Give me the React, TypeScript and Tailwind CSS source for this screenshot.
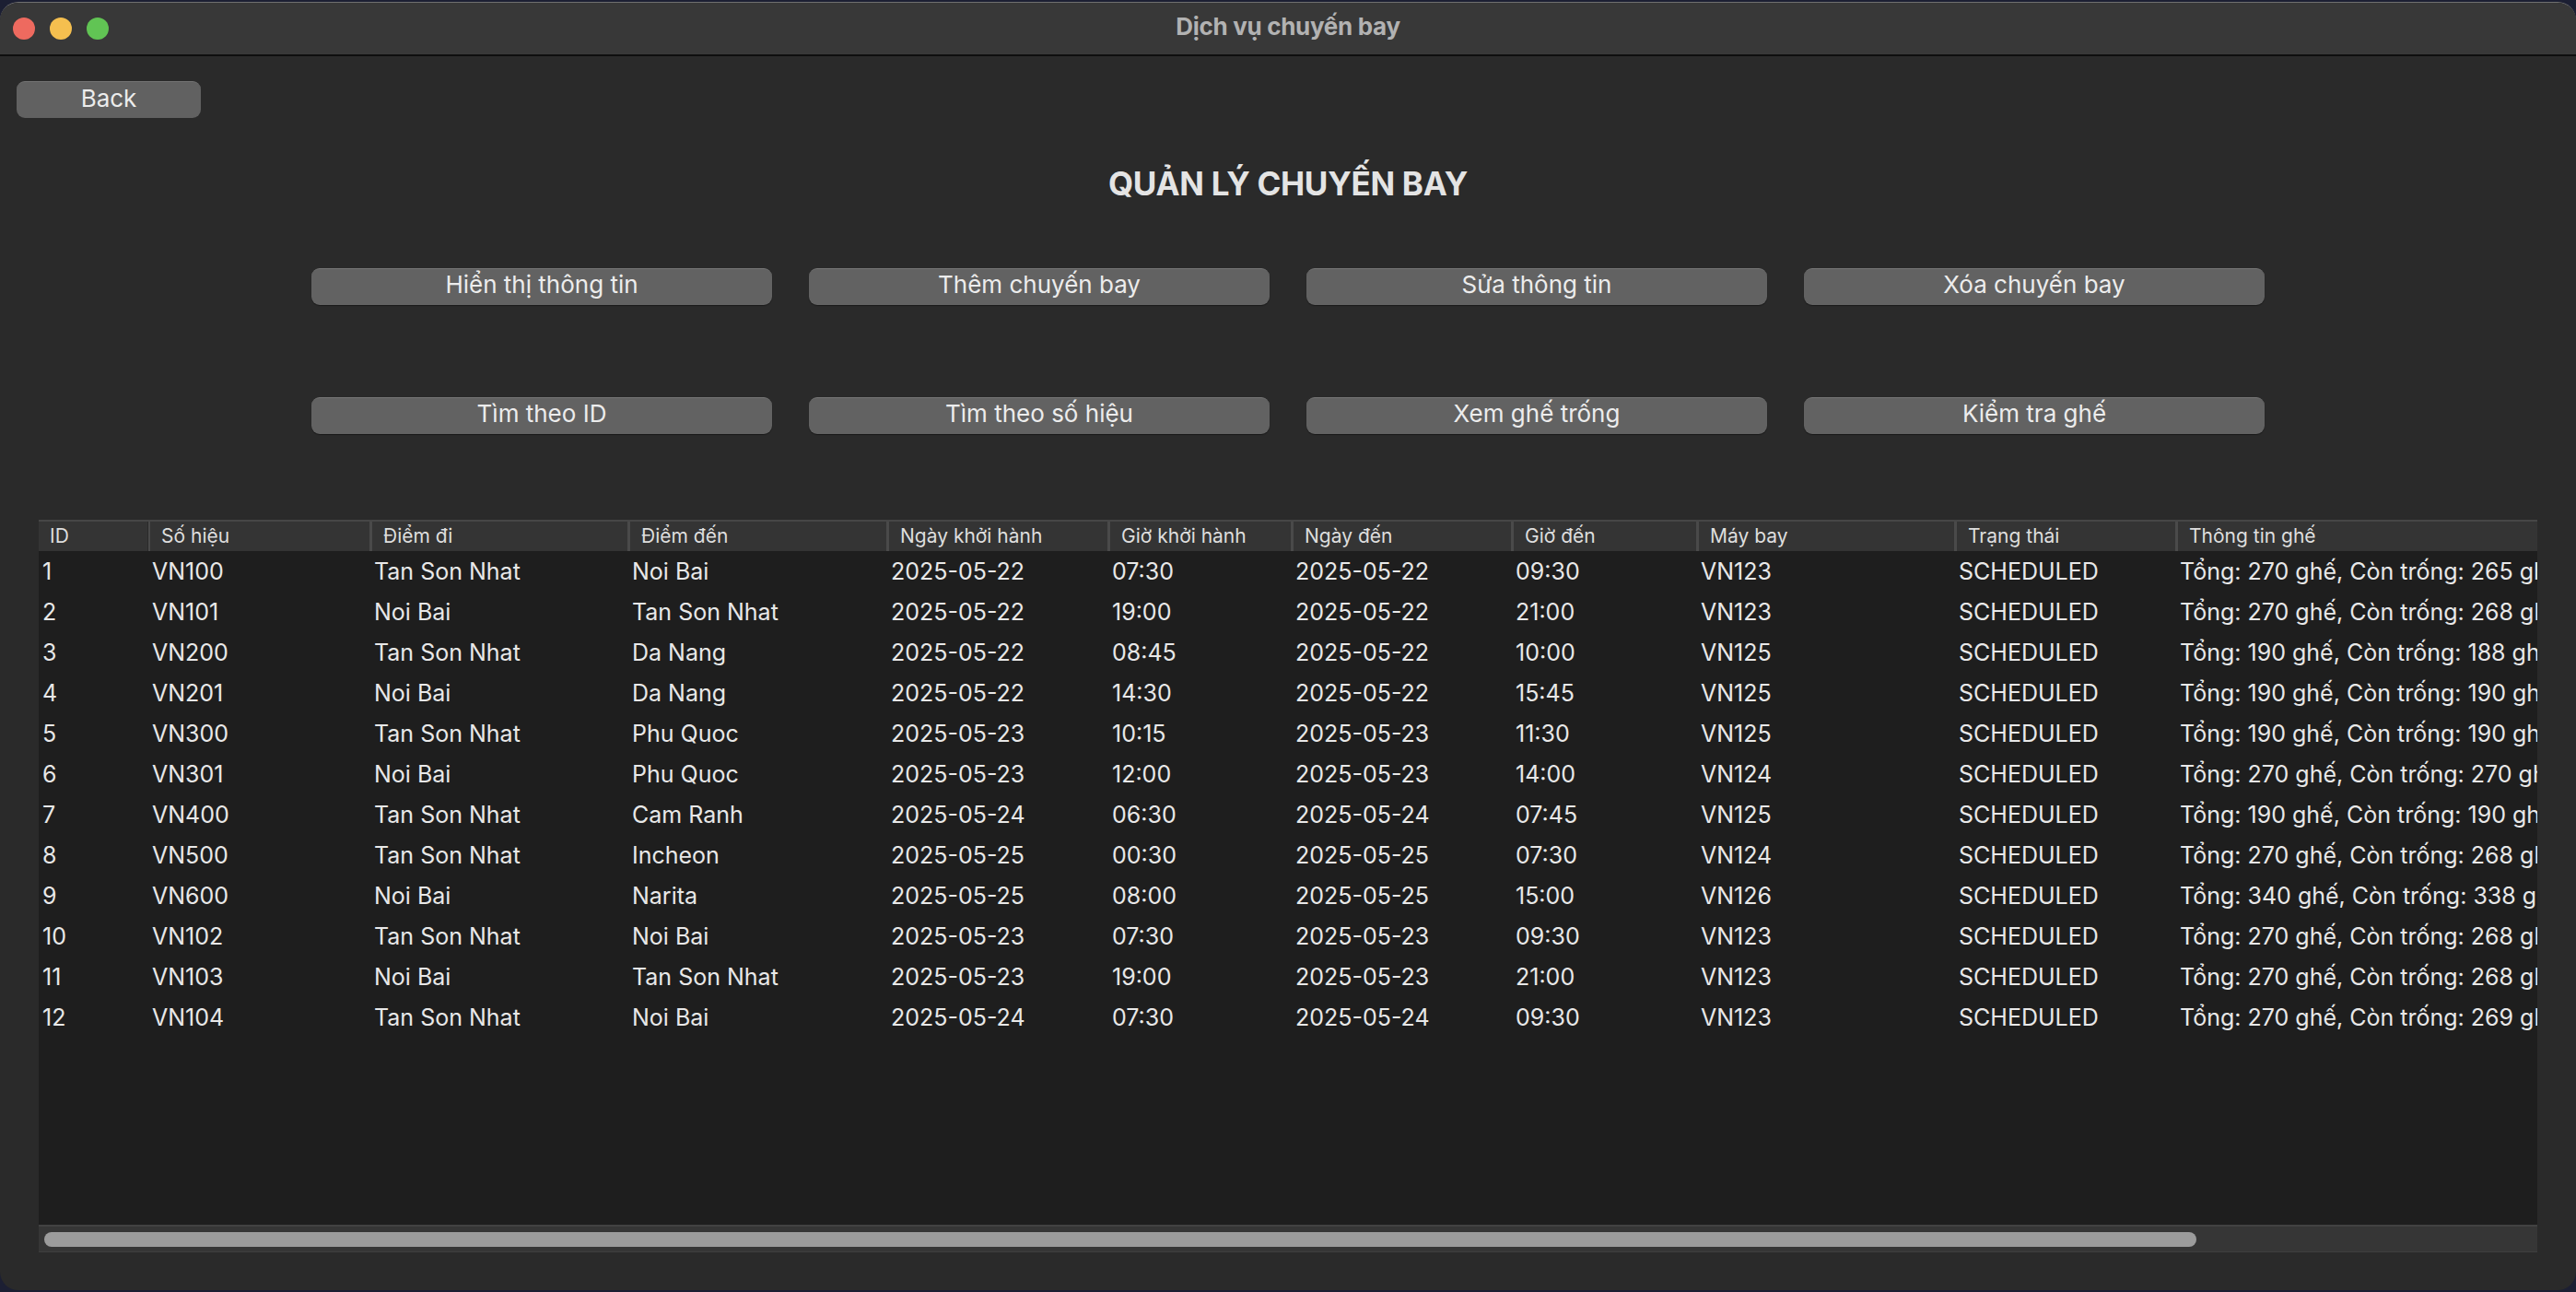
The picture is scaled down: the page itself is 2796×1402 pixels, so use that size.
import React from 'react';

const columns = [
  { title: 'ID', width: 'w-[119px]' },
  { title: 'Số hiệu', width: 'w-[241px]' },
  { title: 'Điểm đi', width: 'w-[280px]' },
  { title: 'Điểm đến', width: 'w-[281px]' },
  { title: 'Ngày khởi hành', width: 'w-[240px]' },
  { title: 'Giờ khởi hành', width: 'w-[199px]' },
  { title: 'Ngày đến', width: 'w-[239px]' },
  { title: 'Giờ đến', width: 'w-[201px]' },
  { title: 'Máy bay', width: 'w-[280px]' },
  { title: 'Trạng thái', width: 'w-[240px]' },
  { title: 'Thông tin ghế', width: 'w-[560px]' },
];

const flights = [
  ['1', 'VN100', 'Tan Son Nhat', 'Noi Bai', '2025-05-22', '07:30', '2025-05-22', '09:30', 'VN123', 'SCHEDULED', 270, 265],
  ['2', 'VN101', 'Noi Bai', 'Tan Son Nhat', '2025-05-22', '19:00', '2025-05-22', '21:00', 'VN123', 'SCHEDULED', 270, 268],
  ['3', 'VN200', 'Tan Son Nhat', 'Da Nang', '2025-05-22', '08:45', '2025-05-22', '10:00', 'VN125', 'SCHEDULED', 190, 188],
  ['4', 'VN201', 'Noi Bai', 'Da Nang', '2025-05-22', '14:30', '2025-05-22', '15:45', 'VN125', 'SCHEDULED', 190, 190],
  ['5', 'VN300', 'Tan Son Nhat', 'Phu Quoc', '2025-05-23', '10:15', '2025-05-23', '11:30', 'VN125', 'SCHEDULED', 190, 190],
  ['6', 'VN301', 'Noi Bai', 'Phu Quoc', '2025-05-23', '12:00', '2025-05-23', '14:00', 'VN124', 'SCHEDULED', 270, 270],
  ['7', 'VN400', 'Tan Son Nhat', 'Cam Ranh', '2025-05-24', '06:30', '2025-05-24', '07:45', 'VN125', 'SCHEDULED', 190, 190],
  ['8', 'VN500', 'Tan Son Nhat', 'Incheon', '2025-05-25', '00:30', '2025-05-25', '07:30', 'VN124', 'SCHEDULED', 270, 268],
  ['9', 'VN600', 'Noi Bai', 'Narita', '2025-05-25', '08:00', '2025-05-25', '15:00', 'VN126', 'SCHEDULED', 340, 338],
  ['10', 'VN102', 'Tan Son Nhat', 'Noi Bai', '2025-05-23', '07:30', '2025-05-23', '09:30', 'VN123', 'SCHEDULED', 270, 268],
  ['11', 'VN103', 'Noi Bai', 'Tan Son Nhat', '2025-05-23', '19:00', '2025-05-23', '21:00', 'VN123', 'SCHEDULED', 270, 268],
  ['12', 'VN104', 'Tan Son Nhat', 'Noi Bai', '2025-05-24', '07:30', '2025-05-24', '09:30', 'VN123', 'SCHEDULED', 270, 269],
];

const actions = [
  ['Hiển thị thông tin', 'Thêm chuyến bay', 'Sửa thông tin', 'Xóa chuyến bay'],
  ['Tìm theo ID', 'Tìm theo số hiệu', 'Xem ghế trống', 'Kiểm tra ghế'],
];

function ActionButton({ label }: { label: string }) {
  return (
    <button className="h-[40px] w-[500px] rounded-[9px] bg-[#626262] border-t border-[#767676] pb-[5px] text-[26px] leading-none text-[#ececec] shadow-[0_1px_1px_rgba(0,0,0,0.4)]">
      {label}
    </button>
  );
}

export default function App() {
  return (
    <div
      className="w-[2796px] h-[1402px] bg-[#1c1f33] pt-[2px] overflow-hidden"
      style={{ fontFamily: 'Inter, "Noto Sans", sans-serif' }}
    >
      <div className="h-[1398px] rounded-[20px] overflow-hidden border-t border-[#707070] bg-[#2a2a2a] flex flex-col">
        {/* Title bar */}
        <div className="h-[58px] shrink-0 bg-[#383838] border-b-2 border-[#0e0e0e] grid grid-cols-[1fr_auto_1fr] items-center">
          <div className="flex items-center gap-[16px] pl-[14px]">
            <span className="w-[24px] h-[24px] rounded-full bg-[#ee6a5f]" />
            <span className="w-[24px] h-[24px] rounded-full bg-[#f5bf4f]" />
            <span className="w-[24px] h-[24px] rounded-full bg-[#61c454]" />
          </div>
          <div className="text-[26px] font-bold text-[#b2b2b2] pb-[6px] tracking-[-0.3px]">Dịch vụ chuyến bay</div>
          <div />
        </div>

        {/* Content */}
        <div className="flex-1 flex flex-col">
          <div className="pl-[18px] pt-[27px]">
            <button className="h-[40px] w-[200px] rounded-[9px] bg-[#616161] border-t border-[#737373] pb-[3px] text-[26px] leading-none text-[#ececec]">
              Back
            </button>
          </div>

          <h1 className="mt-[50px] h-[42px] text-center text-[35px] leading-[42px] font-bold text-[#e4e4e4] tracking-[-0.3px]">
            QUẢN LÝ CHUYẾN BAY
          </h1>

          <div className="mt-[71px] flex flex-col items-center gap-[100px]">
            {actions.map((row, i) => (
              <div key={i} className="flex gap-[40px]">
                {row.map((label) => (
                  <ActionButton key={label} label={label} />
                ))}
              </div>
            ))}
          </div>

          {/* Flight table */}
          <div className="mt-[93px] ml-[42px] w-[2712px] h-[795px] flex flex-col overflow-hidden bg-[#1e1e1e]">
            <div className="h-[34px] shrink-0 flex bg-[#343434] border-t-2 border-[#464646] whitespace-nowrap">
              {columns.map((col, i) => (
                <div
                  key={col.title}
                  className={`${col.width} shrink-0 flex items-center pl-[12px] text-[21px] text-[#dedede] ${i > 0 ? 'border-l-2 border-[#4a4a4a]' : ''} border-r border-[#2a2a2a]`}
                >
                  {col.title}
                </div>
              ))}
            </div>

            <div className="flex-1 flex flex-col">
              {flights.map((f) => (
                <div key={f[0]} className="h-[44px] flex items-center pt-[2px] whitespace-nowrap text-[25px] text-[#e8e8e8]">
                  {columns.map((col, i) => (
                    <div key={col.title} className={`${col.width} shrink-0 pl-[4px] overflow-hidden`}>
                      {i < 10 ? f[i] : `Tổng: ${f[10]} ghế, Còn trống: ${f[11]} ghế`}
                    </div>
                  ))}
                </div>
              ))}
            </div>

            <div className="h-[30px] shrink-0 bg-[#363636] border-t-2 border-[#424242] border-b border-b-[#3e3e3e] flex items-center px-[6px]">
              <div className="h-[16px] w-[2336px] rounded-full bg-[#9c9c9c]" />
            </div>
          </div>
        </div>
      </div>
    </div>
  );
}
